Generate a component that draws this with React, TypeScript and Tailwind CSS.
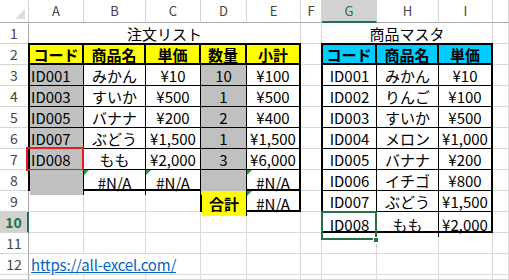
import React from "react";

const FONT = "font-['Noto_Sans_CJK_JP','Noto_Sans',sans-serif]";
// same column / row template for the gridlines and for the tables laid over them
const GRID =
  "grid grid-cols-[29px_55px_62px_55px_46px_54px_21px_55px_62px_54px_1fr] grid-rows-[23px_repeat(12,21px)_1fr]";

const cols = ["A", "B", "C", "D", "E", "F", "G", "H", "I", "J"];
const GL = "border-r border-b border-[#d9d9d9]";

function ErrorMark() {
  return (
    <svg className="absolute left-0 top-0" width="5" height="5" viewBox="0 0 5 5">
      <polygon points="0,0 5,0 0,5" fill="#1f9a3c" />
    </svg>
  );
}

function C({
  children,
  className = "",
  err = false,
}: {
  children?: React.ReactNode;
  className?: string;
  err?: boolean;
}) {
  return (
    <div
      className={`relative flex items-center justify-center whitespace-nowrap pt-[2px] ${className}`}
    >
      {err && <ErrorMark />}
      {children}
    </div>
  );
}

function RowCells({ r }: { r: number }) {
  const head =
    r === 10
      ? "flex items-center justify-center border-b border-b-[#d4d4d4] border-r-2 border-r-[#217346] bg-[#d2d2d2] text-[14px] font-bold text-[#217346]"
      : "flex items-center justify-center border-b border-r border-b-[#d4d4d4] border-r-[#ababab] text-[14px] text-[#444]";

  if (r === 1) {
    return (
      <>
        <div className={head}>{r}</div>
        <div className={`col-span-5 flex items-center justify-center pt-[2px] ${GL}`}>注文リスト</div>
        <div className={GL} />
        <div className={`col-span-3 flex items-center justify-center pt-[2px] ${GL}`}>商品マスタ</div>
        <div className={GL} />
      </>
    );
  }
  if (r === 12) {
    return (
      <>
        <div className={head}>{r}</div>
        <div className={`col-span-3 flex items-center pl-[2px] pt-[2px] ${GL}`}>
          <span className="tracking-[-0.2px] text-[#0563c1] underline">https://all-excel.com/</span>
        </div>
        {cols.slice(3).map((c) => (
          <div key={c} className={GL} />
        ))}
      </>
    );
  }
  return (
    <>
      <div className={head}>{r <= 12 ? r : ""}</div>
      {cols.map((c) => (
        <div key={c} className={GL} />
      ))}
    </>
  );
}

const orders = [
  ["ID001", "みかん", "¥10", "10", "¥100"],
  ["ID003", "すいか", "¥500", "1", "¥500"],
  ["ID005", "バナナ", "¥200", "2", "¥400"],
  ["ID007", "ぶどう", "¥1,500", "1", "¥1,500"],
  ["ID008", "もも", "¥2,000", "3", "¥6,000"],
];

const master = [
  ["ID001", "みかん", "¥10"],
  ["ID002", "りんご", "¥100"],
  ["ID003", "すいか", "¥500"],
  ["ID004", "メロン", "¥1,000"],
  ["ID005", "バナナ", "¥200"],
  ["ID006", "イチゴ", "¥800"],
  ["ID007", "ぶどう", "¥1,500"],
  ["ID008", "もも", "¥2,000"],
];

function OrderTable() {
  const head = "bg-[#ffff00] font-bold border-b-2 border-black";
  return (
    <div className="col-start-2 col-end-7 row-start-3 row-end-10 -ml-px -mt-px grid grid-cols-[54px_62px_55px_46px_1fr] grid-rows-[20px_repeat(5,21px)_1fr] border-2 border-black bg-white">
      <C className={`${head} border-r-2`}>コード</C>
      <C className={`${head} border-r-2`}>商品名</C>
      <C className={`${head} border-r-2`}>単価</C>
      <C className={`${head} border-r-2`}>数量</C>
      <C className={head}>小計</C>
      {orders.map((row, i) => (
        <React.Fragment key={row[0]}>
          <C className="justify-start pl-[1px] bg-[#c0c0c0] border-r border-b border-black">
            {row[0]}
            {i === 4 && (
              <div className="absolute -left-[4px] -top-[2px] -right-[1px] -bottom-[2px] border-2 border-[#e01e1e]" />
            )}
          </C>
          <C className="border-r border-b border-black">{row[1]}</C>
          <C className="border-r border-b border-black">{row[2]}</C>
          <C className="bg-[#c0c0c0] border-r border-b border-black">{row[3]}</C>
          <C className="border-b border-black">{row[4]}</C>
        </React.Fragment>
      ))}
      <C className="bg-[#c0c0c0] border-r border-black" />
      <C className="border-r border-black" err>#N/A</C>
      <C className="border-r border-black" err>#N/A</C>
      <C className="bg-[#c0c0c0] border-r border-black" />
      <C err>#N/A</C>
    </div>
  );
}

function TotalBox() {
  return (
    <div className="col-start-5 col-end-7 row-start-10 row-end-11 -ml-px -mt-[2px] grid grid-cols-[45px_1fr] border-2 border-black bg-white">
      <C className="bg-[#ffff00] font-bold border-r border-black">合計</C>
      <C err>#N/A</C>
    </div>
  );
}

function MasterTable() {
  const head = "bg-[#00ccff] font-bold border-b-2 border-black";
  return (
    <div className="col-start-8 col-end-11 row-start-3 row-end-12 -ml-px -mt-px grid grid-cols-[54px_62px_1fr] grid-rows-[20px_repeat(7,21px)_1fr] border-2 border-black bg-white">
      <C className={`${head} border-r-2`}>コード</C>
      <C className={`${head} border-r-2`}>商品名</C>
      <C className={head}>単価</C>
      {master.map((row, i) => {
        const last = i === master.length - 1;
        const b = last ? "border-black" : "border-b border-black";
        return (
          <React.Fragment key={row[0]}>
            <C className={`border-r ${b}`}>
              {row[0]}
              {last && (
                <>
                  <div className="absolute -left-[2px] -top-[1px] -right-[1px] -bottom-[3px] border-2 border-[#217346]" />
                  <div className="absolute -right-[3px] -bottom-[6px] h-[6px] w-[6px] border border-white bg-[#217346]" />
                </>
              )}
            </C>
            <C className={`border-r ${b}`}>{row[1]}</C>
            <C className={b}>{row[2]}</C>
          </React.Fragment>
        );
      })}
    </div>
  );
}

export default function App() {
  const rows = Array.from({ length: 13 }, (_, i) => i + 1);
  return (
    <div className={`grid h-[280px] w-[509px] overflow-hidden bg-white text-[15px] text-black ${FONT}`}>
      {/* gridlines, headers */}
      <div className={`col-start-1 row-start-1 ${GRID}`}>
        <div className="relative border-r border-b border-r-[#d4d4d4] border-b-[#ababab]">
          <svg className="absolute right-[3px] bottom-[3px]" width="10" height="10" viewBox="0 0 10 10">
            <polygon points="10,0 10,10 0,10" fill="#dcdcdc" />
          </svg>
        </div>
        {cols.map((c) =>
          c === "G" ? (
            <div
              key={c}
              className="flex items-center justify-center border-r border-r-[#d4d4d4] border-b-2 border-b-[#217346] bg-[#d2d2d2] text-[13px] text-[#217346]"
            >
              {c}
            </div>
          ) : (
            <div
              key={c}
              className="flex items-center justify-center border-r border-b border-r-[#d4d4d4] border-b-[#ababab] text-[13px] text-[#444]"
            >
              {c !== "J" && c}
            </div>
          )
        )}
        {rows.map((r) => (
          <RowCells key={r} r={r} />
        ))}
      </div>

      {/* tables */}
      <div className={`col-start-1 row-start-1 ${GRID}`}>
        <OrderTable />
        <TotalBox />
        <MasterTable />
      </div>
    </div>
  );
}
